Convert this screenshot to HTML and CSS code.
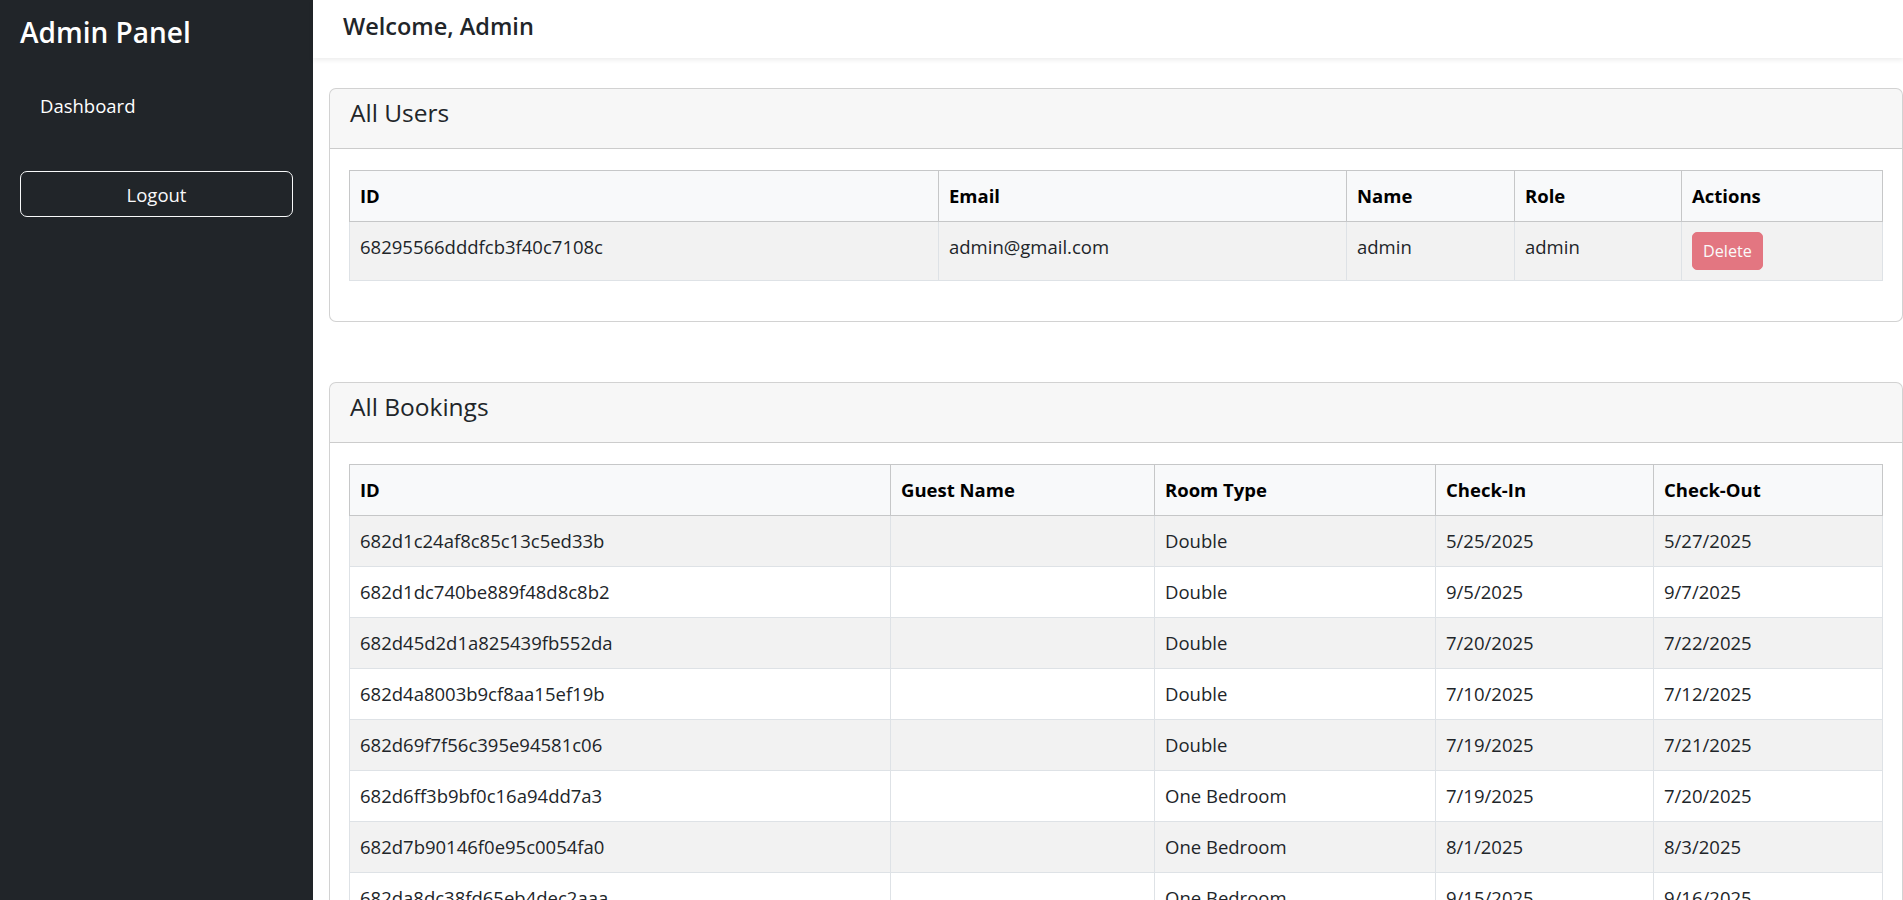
FILE: index.html
```html
<!DOCTYPE html>
<html lang="en">
<head>
<meta charset="utf-8">
<title>Admin Panel</title>
<link rel="stylesheet" href="styles.css">
</head>
<body>
<div class="layout">
  <aside class="sidebar">
    <h3 class="brand">Admin Panel</h3>
    <ul class="nav">
      <li><a class="nav-link" href="#">Dashboard</a></li>
    </ul>
    <button class="logout" type="button">Logout</button>
  </aside>
  <div class="main">
    <header class="topbar">
      <h5 class="welcome">Welcome, Admin</h5>
    </header>
    <div class="content">
      <section class="card">
        <div class="card-header"><h4 class="card-title">All Users</h4></div>
        <div class="card-body">
          <table class="table">
            <colgroup>
              <col class="u-id"><col class="u-email"><col class="u-name"><col class="u-role"><col>
            </colgroup>
            <thead>
              <tr><th>ID</th><th>Email</th><th>Name</th><th>Role</th><th>Actions</th></tr>
            </thead>
            <tbody>
              <tr>
                <td>68295566dddfcb3f40c7108c</td>
                <td>admin@gmail.com</td>
                <td>admin</td>
                <td>admin</td>
                <td><button class="btn-delete" type="button" disabled>Delete</button></td>
              </tr>
            </tbody>
          </table>
        </div>
      </section>

      <section class="card">
        <div class="card-header"><h4 class="card-title">All Bookings</h4></div>
        <div class="card-body">
          <table class="table">
            <colgroup>
              <col class="b-id"><col class="b-guest"><col class="b-room"><col class="b-in"><col>
            </colgroup>
            <thead>
              <tr><th>ID</th><th>Guest Name</th><th>Room Type</th><th>Check-In</th><th>Check-Out</th></tr>
            </thead>
            <tbody>
              <tr><td>682d1c24af8c85c13c5ed33b</td><td></td><td>Double</td><td>5/25/2025</td><td>5/27/2025</td></tr>
              <tr><td>682d1dc740be889f48d8c8b2</td><td></td><td>Double</td><td>9/5/2025</td><td>9/7/2025</td></tr>
              <tr><td>682d45d2d1a825439fb552da</td><td></td><td>Double</td><td>7/20/2025</td><td>7/22/2025</td></tr>
              <tr><td>682d4a8003b9cf8aa15ef19b</td><td></td><td>Double</td><td>7/10/2025</td><td>7/12/2025</td></tr>
              <tr><td>682d69f7f56c395e94581c06</td><td></td><td>Double</td><td>7/19/2025</td><td>7/21/2025</td></tr>
              <tr><td>682d6ff3b9bf0c16a94dd7a3</td><td></td><td>One Bedroom</td><td>7/19/2025</td><td>7/20/2025</td></tr>
              <tr><td>682d7b90146f0e95c0054fa0</td><td></td><td>One Bedroom</td><td>8/1/2025</td><td>8/3/2025</td></tr>
              <tr><td>682da8dc38fd65eb4dec2aaa</td><td></td><td>One Bedroom</td><td>9/15/2025</td><td>9/16/2025</td></tr>
            </tbody>
          </table>
        </div>
      </section>
    </div>
  </div>
</div>
</body>
</html>
```

FILE: styles.css
```css
* { box-sizing: border-box; }

html, body {
  margin: 0;
  padding: 0;
}

body {
  font-family: "Open Sans", "Noto Sans", sans-serif;
  color: #212529;
  background: #fff;
}

.layout {
  display: flex;
  min-height: 100vh;
}

/* Sidebar */
.sidebar {
  flex: 0 0 313px;
  width: 313px;
  background: #212529;
  color: #fff;
  padding: 16px 20px;
}

.brand {
  margin: 0 0 32px;
  font-size: 28px;
  font-weight: 600;
  line-height: 33.6px;
  color: #fff;
}

.nav {
  list-style: none;
  margin: 0;
  padding: 0;
}

.nav-link {
  display: block;
  padding: 10px 20px;
  font-size: 18.5px;
  line-height: 27.75px;
  color: #fff;
  text-decoration: none;
}

.logout {
  display: block;
  width: 100%;
  height: 46px;
  margin-top: 42px;
  padding: 9px 12px 7px;
  border: 1px solid #f8f9fa;
  border-radius: 7px;
  background: transparent;
  color: #f8f9fa;
  font-family: inherit;
  font-size: 18.5px;
  line-height: 28px;
  text-align: center;
}

/* Main */
.main {
  flex: 1 1 auto;
  min-width: 0;
}

.topbar {
  height: 58px;
  padding: 12px 30px 0;
  background: #fff;
  box-shadow: 0 2px 5px rgba(0, 0, 0, 0.08);
}

.welcome {
  margin: 0;
  font-size: 23.5px;
  font-weight: 600;
  line-height: 28.2px;
  color: #212529;
}

.content {
  padding: 30px 0 0 16px;
}

.card {
  border: 1px solid rgba(0, 0, 0, 0.175);
  border-radius: 7px;
  margin-bottom: 60px;
  background: #fff;
}

.card-header {
  background: rgba(0, 0, 0, 0.03);
  padding: 8px 20px 20px;
  border-bottom: 1px solid rgba(0, 0, 0, 0.175);
  border-radius: 6px 6px 0 0;
}

.card-title {
  margin: 0;
  font-size: 24.5px;
  font-weight: 500;
  line-height: 31px;
  color: #212529;
}

.card-body {
  padding: 21px 19px 20px;
}

/* Tables */
.table {
  width: 100%;
  border-collapse: collapse;
  table-layout: fixed;
  margin: 0 0 20px;
  font-size: 18.5px;
  line-height: 30px;
  color: #212529;
}

.table th,
.table td {
  padding: 10px;
  text-align: left;
  vertical-align: top;
  border: 1px solid #dee2e6;
  white-space: nowrap;
}

.table thead th {
  background: #f8f9fa;
  color: #000;
  font-weight: 700;
  border-color: #c6c7c8;
}

.table tbody tr:nth-child(odd) td {
  background: #f2f2f2;
}

.u-id { width: 589px; }
.u-email { width: 408px; }
.u-name { width: 168px; }
.u-role { width: 167px; }

.b-id { width: 541px; }
.b-guest { width: 264px; }
.b-room { width: 281px; }
.b-in { width: 218px; }

.btn-delete {
  display: inline-block;
  vertical-align: top;
  padding: 5px 10px;
  border: 1px solid #dc3545;
  border-radius: 5px;
  background: #dc3545;
  color: #fff;
  font-family: inherit;
  font-size: 16.2px;
  line-height: 26px;
  opacity: 0.65;
}
```
